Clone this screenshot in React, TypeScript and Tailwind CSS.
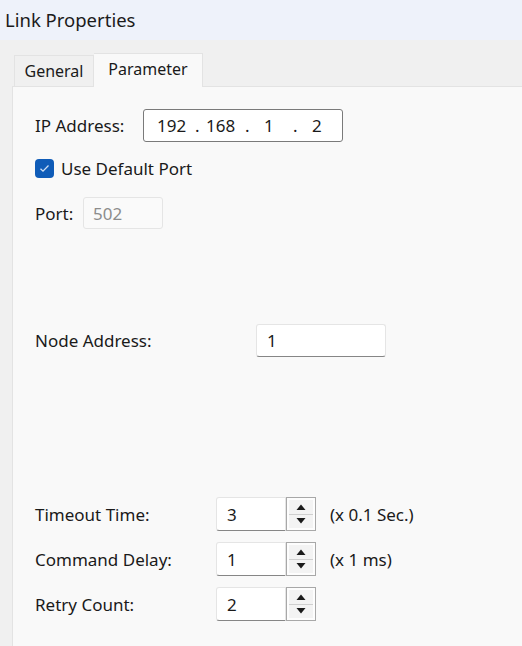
import React from "react";

const font = { fontFamily: '"Noto Sans", "Segoe UI", Arial, sans-serif' };

function Spin({ value }: { value: string }) {
  return (
    <div className="flex h-[34px] w-[100px]">
      <div className="flex flex-1 items-center rounded-l-[3px] border border-[#e5e5e5] border-b-[#868686] bg-white pl-[10px]">
        {value}
      </div>
      <div className="flex w-[30px] flex-col border border-[#a8a8a8] bg-[#fdfdfd] p-[2px]">
        <div className="flex flex-1 items-center justify-center border-b border-[#cfcfcf] bg-[#f3f3f3]">
          <svg width="10" height="6" viewBox="0 0 10 6">
            <path d="M0.5 6 L5 0.5 L9.5 6 Z" fill="#1a1a1a" />
          </svg>
        </div>
        <div className="flex flex-1 items-center justify-center bg-[#f3f3f3]">
          <svg width="10" height="6" viewBox="0 0 10 6">
            <path d="M0.5 0 L5 5.5 L9.5 0 Z" fill="#1a1a1a" />
          </svg>
        </div>
      </div>
    </div>
  );
}

export default function App() {
  return (
    <div className="flex h-[646px] w-[522px] flex-col overflow-hidden text-[17px] leading-[21px] text-[#1a1a1a]" style={font}>
      {/* title bar */}
      <div className="flex h-[40px] items-center bg-[#eef2fa] pl-[5px] pb-[2px] text-[18.5px] text-[#1b1b1b]">
        Link Properties
      </div>

      {/* tab strip */}
      <div className="flex h-[46px] items-end bg-[#f0f0f0] pl-[14px]">
        <div className="flex h-[31px] w-[80px] items-center justify-center border border-b-0 border-[#e3e3e3] bg-[#f0f0f0] text-[16px]">
          General
        </div>
        <div className="relative top-[1px] flex h-[34px] w-[109px] items-center justify-center border border-b-0 border-l-0 border-[#e3e3e3] bg-[#f9f9f9] pb-[3px] text-[16px]">
          Parameter
        </div>
      </div>

      {/* panel */}
      <div className="flex flex-1">
        <div className="w-[12px] bg-[#f0f0f0]" />
        <div className="flex flex-1 flex-col border-l border-t border-[#e3e3e3] bg-[#f9f9f9] pl-[22px] pt-[22px]">
          <div className="flex items-center">
            <span className="w-[108px]">IP Address:</span>
            <div className="relative h-[33px] w-[200px] rounded-[3px] border border-[#7a7a7a] bg-white">
              <span className="absolute left-[13px] top-[5px]">192</span>
              <span className="absolute left-[51px] top-[5px]">.</span>
              <span className="absolute left-[62px] top-[5px]">168</span>
              <span className="absolute left-[101px] top-[5px]">.</span>
              <span className="absolute left-[120px] top-[5px]">1</span>
              <span className="absolute left-[149px] top-[5px]">.</span>
              <span className="absolute left-[168px] top-[5px]">2</span>
            </div>
          </div>

          <div className="mt-[16px] flex items-center">
            <div className="flex h-[19px] w-[19px] items-center justify-center rounded-[4px] bg-[#0f5cb8]">
              <svg width="11" height="9" viewBox="0 0 11 9">
                <path d="M1.5 4.8 L4 7.2 L9.5 1.5" fill="none" stroke="#cfe0f5" strokeWidth="1.3" />
              </svg>
            </div>
            <span className="ml-[7px]">Use Default Port</span>
          </div>

          <div className="mt-[18px] flex items-center">
            <span className="w-[48px]">Port:</span>
            <div className="flex h-[32px] w-[80px] items-center rounded-[3px] border border-[#e5e5e5] bg-[#fafafa] pl-[9px] text-[#8c8c8c]">
              502
            </div>
          </div>

          <div className="mt-[95px] flex items-center">
            <span className="w-[221px]">Node Address:</span>
            <div className="flex h-[33px] w-[130px] items-center rounded-[3px] border border-[#e5e5e5] border-b-[#868686] bg-white pl-[10px]">
              1
            </div>
          </div>

          <div className="mt-[140px] flex flex-col gap-[11px]">
            <div className="flex items-center">
              <span className="w-[181px]">Timeout Time:</span>
              <Spin value="3" />
              <span className="ml-[14px]">(x 0.1 Sec.)</span>
            </div>
            <div className="flex items-center">
              <span className="w-[181px]">Command Delay:</span>
              <Spin value="1" />
              <span className="ml-[14px]">(x 1 ms)</span>
            </div>
            <div className="flex items-center">
              <span className="w-[181px]">Retry Count:</span>
              <Spin value="2" />
            </div>
          </div>
        </div>
      </div>
    </div>
  );
}
